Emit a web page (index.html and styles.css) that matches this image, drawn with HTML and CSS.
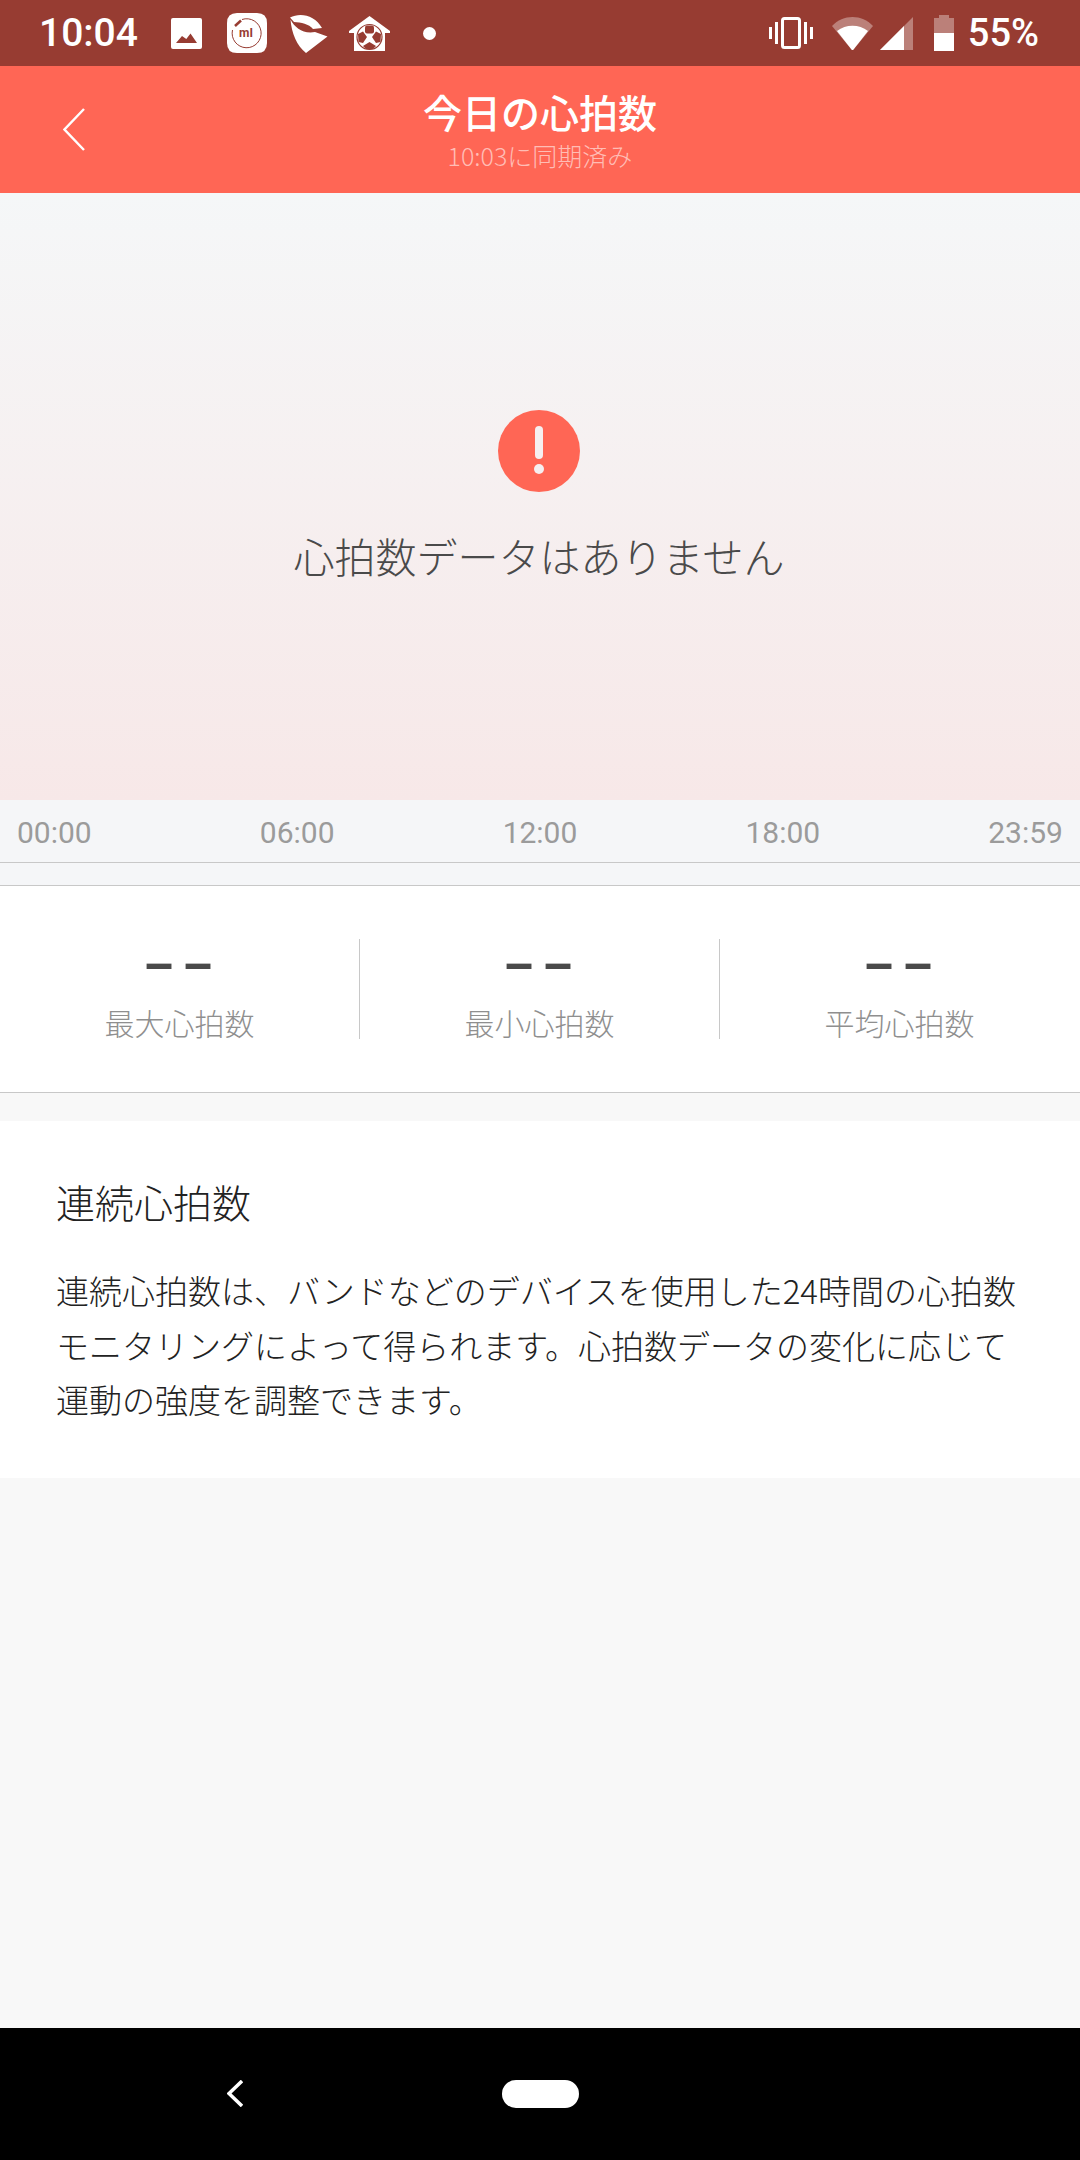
FILE: index.html
```html
<!DOCTYPE html>
<html lang="ja">
<head>
  <meta charset="UTF-8">
  <meta name="viewport" content="width=device-width, initial-scale=1.0">
  <title>今日の心拍数</title>
  <link rel="stylesheet" href="styles.css">
</head>
<body>

  <!-- status bar -->
  <div class="status_bar">
    <span class="clock">10:04</span>
    <svg class="icon_photo" viewBox="0 0 31 31">
      <rect width="31" height="31" rx="2" fill="#fff"/>
      <path d="M5 25 L11 18 L15.3 21 L19.5 15.5 L26 25 Z" fill="#973c32"/>
    </svg>
    <svg class="icon_mi" viewBox="0 0 40 40">
      <path d="M10 0 H30 Q40 0 40 10 V30 Q40 40 30 40 H10 Q0 40 0 30 V10 Q0 0 10 0 Z" fill="#fff"/>
      <path d="M15 6.5 A14.5 14.5 0 1 1 5.5 17" fill="none" stroke="#973c32" stroke-width="1"/>
      <path d="M8 13 L14 7.5" fill="none" stroke="#973c32" stroke-width="2.5"/>
      <text x="19" y="24" text-anchor="middle" class="mi_text">mI</text>
    </svg>
    <svg class="icon_wing" viewBox="0 0 38 39">
      <path d="M0 3.5 C10 -2 25 1 32 14 L23 15 C19 10 11 8.5 4 8 Z" fill="#fff"/>
      <path d="M0.5 5.5 C5 14 13 20 25 18 L37.5 22.5 L16 39 C7 32 1.5 19 0.5 5.5 Z" fill="#fff"/>
    </svg>
    <svg class="icon_house" viewBox="0 0 41 35">
      <path d="M20.5 0 L41 15 V17 H36 V35 H5 V17 H0 V15 Z" fill="#fff"/>
      <circle cx="20.5" cy="21" r="12.5" fill="none" stroke="#973c32" stroke-width="1.2"/>
      <rect x="16" y="9.5" width="9" height="8" rx="2" fill="#973c32"/>
      <path d="M9 18 L14 15.5 L18 21 L14 27 L9.5 26 Z" fill="#973c32"/>
      <path d="M32 18 L27 15.5 L23 21 L27 27 L31.5 26 Z" fill="#973c32"/>
      <path d="M14 30 L20.5 26 L27 30 L24 33 H17 Z" fill="#973c32"/>
    </svg>
    <span class="dot"></span>
    <span class="spacer"></span>
    <svg class="icon_vibrate" viewBox="0 0 44 32">
      <rect x="13.5" y="1.5" width="17" height="29" rx="2" fill="none" stroke="#fff" stroke-width="3"/>
      <rect x="0" y="10" width="3" height="12" fill="#fff"/>
      <rect x="6" y="5" width="3" height="22" fill="#fff"/>
      <rect x="35" y="5" width="3" height="22" fill="#fff"/>
      <rect x="41" y="10" width="3" height="12" fill="#fff"/>
    </svg>
    <svg class="icon_wifi" viewBox="0 0 41 33">
      <path d="M0 9 C11 -3 30 -3 41 9 L21.5 32.5 Q20.5 33.5 19.5 32.5 Z" fill="#fff" fill-opacity="0.35"/>
      <path d="M5 14 C14 7 27 7 36 14 L21.5 32.5 Q20.5 33.5 19.5 32.5 Z" fill="#fff"/>
    </svg>
    <svg class="icon_signal" viewBox="0 0 33 33">
      <path d="M0 33 L33 0 V33 Z" fill="#fff" fill-opacity="0.35"/>
      <path d="M0 33 L24 9 V33 Z" fill="#fff"/>
    </svg>
    <svg class="icon_battery" viewBox="0 0 20 36">
      <path d="M5 0 H15 V3 H20 V36 H0 V3 H5 Z" fill="#fff" fill-opacity="0.35"/>
      <rect x="0" y="18" width="20" height="18" fill="#fff"/>
    </svg>
    <span class="percent">55%</span>
  </div>

  <!-- header -->
  <div class="header">
    <svg class="back" viewBox="0 0 22 43">
      <path d="M21 1 L1.5 21.5 L21 42" fill="none" stroke="#fff" stroke-width="2.4"/>
    </svg>
    <div class="header_text">
      <h1>今日の心拍数</h1>
      <p>10:03に同期済み</p>
    </div>
  </div>

  <!-- chart -->
  <div class="chart">
    <svg class="alert" viewBox="0 0 82 82">
      <circle cx="41" cy="41" r="41" fill="#ff6655"/>
      <rect x="37" y="16" width="8" height="33" rx="4" fill="#f6eff0"/>
      <circle cx="41" cy="59" r="5" fill="#f6eff0"/>
    </svg>
    <p class="no_data">心拍数データはありません</p>
  </div>
  <div class="axis">
    <span>00:00</span>
    <span>06:00</span>
    <span>12:00</span>
    <span>18:00</span>
    <span>23:59</span>
  </div>
  <div class="axis_gap"></div>

  <!-- stats -->
  <div class="stats">
    <div class="stat">
      <div class="stat_value">––</div>
      <div class="stat_label">最大心拍数</div>
    </div>
    <div class="stat">
      <div class="stat_value">––</div>
      <div class="stat_label">最小心拍数</div>
    </div>
    <div class="stat">
      <div class="stat_value">––</div>
      <div class="stat_label">平均心拍数</div>
    </div>
  </div>

  <!-- description -->
  <div class="info">
    <h2>連続心拍数</h2>
    <p>連続心拍数は、バンドなどのデバイスを使用した24時間の心拍数<br>モニタリングによって得られます。心拍数データの変化に応じて<br>運動の強度を調整できます。</p>
  </div>

  <div class="filler"></div>

  <!-- nav bar -->
  <div class="nav_bar">
    <svg class="nav_back" viewBox="0 0 16 27">
      <path d="M15 1 L2 13.5 L15 26" fill="none" stroke="#fff" stroke-width="3.5"/>
    </svg>
    <span class="nav_pill"></span>
  </div>

</body>
</html>
```

FILE: styles.css
```css
html {
  box-sizing: border-box;
}
*, *:before, *:after {
  box-sizing: inherit;
}
body {
  margin: 0;
  width: 1080px;
  height: 2160px;
  display: flex;
  flex-direction: column;
  background-color: #f8f8f8;
  font-family: "Noto Sans CJK JP", Roboto, sans-serif;
  font-weight: 300;
}
h1, h2, p {
  margin: 0;
  font-weight: 300;
}
svg {
  display: block;
  flex-shrink: 0;
}

.status_bar {
  height: 66px;
  padding: 0 41px;
  display: flex;
  align-items: center;
  background-color: #973c32;
  color: #fff;
  font-family: Roboto, sans-serif;
  font-size: 38px;
}
.clock {
  width: 132px;
  margin-left: -2px;
  font-size: 39px;
  font-weight: 500;
}
.icon_photo {
  width: 31px;
  height: 31px;
}
.icon_mi {
  width: 40px;
  height: 40px;
  margin-left: 25px;
}
.mi_text {
  font-family: Roboto, sans-serif;
  font-size: 12px;
  font-weight: 700;
  fill: #973c32;
}
.icon_wing {
  width: 38px;
  height: 39px;
  margin-left: 23px;
}
.icon_house {
  width: 41px;
  height: 35px;
  margin-left: 21px;
}
.dot {
  width: 13px;
  height: 13px;
  margin-left: 33px;
  border-radius: 50%;
  background-color: #fff;
}
.spacer {
  flex: 1;
}
.icon_vibrate {
  width: 44px;
  height: 32px;
}
.icon_wifi {
  width: 41px;
  height: 33px;
  margin-left: 19px;
}
.icon_signal {
  width: 33px;
  height: 33px;
  margin-left: 7px;
}
.icon_battery {
  width: 20px;
  height: 36px;
  margin-left: 21px;
}
.percent {
  margin-left: 14px;
  font-weight: 500;
}

.header {
  height: 127px;
  display: grid;
  grid-template-columns: 1fr auto 1fr;
  align-items: center;
  background-color: #ff6655;
  color: #fff;
}
.back {
  width: 22px;
  height: 43px;
  margin-left: 63px;
}
.header_text {
  padding-bottom: 3px;
  text-align: center;
}
.header_text h1 {
  font-size: 39px;
  line-height: 50px;
  font-weight: 500;
}
.header_text p {
  margin-top: 4px;
  font-size: 25px;
  line-height: 30px;
  color: #ffbdb5;
}

.chart {
  height: 607px;
  padding: 217px 2px 0 0;
  display: flex;
  flex-direction: column;
  align-items: center;
  background: linear-gradient(#f5f7f8, #f7e8e8);
}
.alert {
  width: 82px;
  height: 82px;
}
.no_data {
  margin-top: 35px;
  font-size: 41px;
  line-height: 56px;
  color: #4a4a4a;
}
.axis {
  height: 63px;
  padding: 2px 17px 0;
  display: flex;
  justify-content: space-between;
  align-items: center;
  border-bottom: 1px solid #c8c8c8;
  background-color: #f5f6f8;
  color: #9b9b9b;
  font-family: Roboto, sans-serif;
  font-size: 30px;
  font-weight: 400;
}
.axis_gap {
  height: 22px;
  background-color: #f5f6f8;
}

.stats {
  height: 208px;
  padding: 53px 1px 0 0;
  display: flex;
  align-items: flex-start;
  border-top: 1px solid #c8c8c8;
  border-bottom: 1px solid #c8c8c8;
  background-color: #fff;
}
.stat {
  flex: 1;
  height: 100px;
  text-align: center;
  border-left: 1px solid #c8c8c8;
}
.stat:first-child {
  border-left: none;
}
.stat_value {
  height: 59px;
  padding-left: 5px;
  font-family: Roboto, sans-serif;
  font-size: 49px;
  line-height: 55px;
  font-weight: 700;
  letter-spacing: 8px;
  color: #4a4a4a;
}
.stat_label {
  font-size: 30px;
  line-height: 48px;
  color: #8f8f8f;
}

.info {
  height: 357px;
  margin-top: 28px;
  padding: 51px 56px 0;
  background-color: #fff;
}
.info h2 {
  font-size: 39px;
  line-height: 58px;
  color: #222;
}
.info p {
  margin-top: 33px;
  font-size: 33px;
  line-height: 54.5px;
  color: #222;
}

.filler {
  flex: 1;
}
.nav_bar {
  height: 132px;
  padding: 52px 0 0 227px;
  display: flex;
  align-items: flex-start;
  background-color: #000;
}
.nav_back {
  width: 16px;
  height: 27px;
}
.nav_pill {
  width: 77px;
  height: 28px;
  margin-left: 259px;
  border-radius: 14px;
  background-color: #fff;
}
```
